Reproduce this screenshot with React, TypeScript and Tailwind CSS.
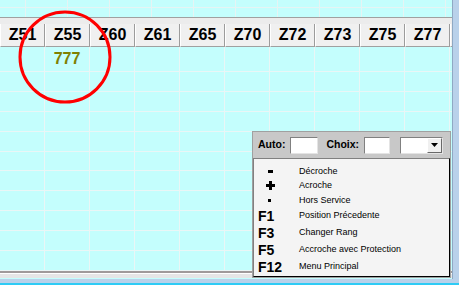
const columns = ["Z51", "Z55", "Z60", "Z61", "Z65", "Z70", "Z72", "Z73", "Z75", "Z77"]

const keys = [
  { key: "-", label: "Décroche", small: true },
  { key: "+", label: "Acroche", small: true },
  { key: "·", label: "Hors Service", small: true },
  { key: "F1", label: "Position Précedente", small: false },
  { key: "F3", label: "Changer Rang", small: false },
  { key: "F5", label: "Accroche avec Protection", small: false },
  { key: "F12", label: "Menu Principal", small: false },
]

const topLines = [25, 67, 109, 151, 193, 235, 277, 319, 361, 403, 445]

function KeyGlyph({ k }: { k: string }) {
  // the symbol keys are drawn as thick marks, like the bold system font of the original
  if (k === "-") return <div className="ml-[14px] w-[5px] h-[3px] bg-black" />
  if (k === "+")
    return (
      <svg className="ml-[12px]" width="9" height="9" viewBox="0 0 9 9">
        <path d="M3 0h3v3h3v3H6v3H3V6H0V3h3z" fill="#000" />
      </svg>
    )
  if (k === "·") return <div className="ml-[14px] w-[3px] h-[3px] bg-black" />
  return <span className="pl-[4px] text-[14px] font-bold text-black">{k}</span>
}

export default function App() {
  const rows = Array.from({ length: 11 }, (_, i) => i)

  return (
    <div className="relative w-[459px] h-[285px] overflow-hidden bg-[#c4fefd] font-['Liberation_Sans',Arial,sans-serif]">
      <div className="flex h-[279px]">
        {/* main grid area */}
        <div className="flex flex-col w-[452px]">
          {/* upper scrolled grid */}
          <div className="relative h-[18px] border-b border-[#a0a0a0]">
            <div className="absolute left-0 right-0 top-[7px] h-px bg-[#e6f4f4]" />
            {topLines.map((x) => (
              <div key={x} className="absolute top-0 bottom-0 w-px bg-[#e6f4f4]" style={{ left: x }} />
            ))}
          </div>
          <div className="h-[6px] bg-[#ececec]" />

          {/* header */}
          <div className="flex h-[23px] bg-[#f0f0f0]">
            {columns.map((c) => (
              <div
                key={c}
                className="w-[45px] shrink-0 flex items-center justify-center border-l border-white border-r border-r-[#9c9c9c] border-b border-b-[#a0a0a0] text-[16px] font-bold text-black"
              >
                {c}
              </div>
            ))}
            <div className="w-[2px] shrink-0 border-l border-white border-b border-b-[#a0a0a0]" />
          </div>

          {/* body */}
          <div className="grid grid-cols-[repeat(10,45px)_2px] grid-rows-[repeat(11,1fr)] h-[224px]">
            {rows.map((r) =>
              [...columns, "x"].map((c, ci) => (
                <div
                  key={`${r}-${c}`}
                  className={`flex items-center justify-center border-b border-[#eaf6f6] ${ci < 10 ? "border-r" : ""}`}
                >
                  {r === 0 && c === "Z55" && <span className="text-[16px] font-bold text-[#808000]">777</span>}
                </div>
              )),
            )}
          </div>

          <div className="h-[2px] bg-[#a09a9a]" />
          <div className="h-px bg-white" />
          <div className="h-[4px] bg-[#e6e6e6]" />
        </div>

        {/* right window edge */}
        <div className="w-[7px] border-l border-[#8fa9c4] bg-[#b9d1ea]" />
      </div>
      <div className="h-[4px] bg-[#b9d1ea]" />
      <div className="h-[2px] bg-[#2ecbf5]" />

      {/* red marker circle */}
      <svg className="absolute left-0 top-0" width="140" height="120" viewBox="0 0 140 120">
        <circle cx="65" cy="57" r="45" fill="none" stroke="#ff0000" strokeWidth="3" />
      </svg>

      {/* shortcut panel */}
      <div className="absolute left-[252px] top-[131px] w-[199px] h-[147px] flex flex-col bg-[#c8c8c8] border border-[#a0a0a0]">
        <div className="h-[26px] shrink-0 flex items-center pl-[5px] text-[10.5px] font-bold text-black">
          <span>Auto:</span>
          <div className="ml-[5px] w-[28px] h-[17px] bg-white border-t border-l border-[#808080] border-r border-b border-r-[#e4e4e4] border-b-[#e4e4e4]" />
          <span className="ml-[8px]">Choix:</span>
          <div className="ml-[5px] w-[26px] h-[17px] bg-white border-t border-l border-[#808080] border-r border-b border-r-[#e4e4e4] border-b-[#e4e4e4]" />
          <div className="ml-[10px] w-[43px] h-[17px] bg-white flex justify-end border-t border-l border-[#808080] border-r border-b border-r-[#e4e4e4] border-b-[#e4e4e4]">
            <div className="w-[15px] h-full bg-[#f0f0f0] flex items-center justify-center border-l border-t border-white border-r border-b border-r-[#696969] border-b-[#696969]">
              <svg width="7" height="4" viewBox="0 0 7 4">
                <path d="M0 0h7L3.5 4z" fill="#000" />
              </svg>
            </div>
          </div>
        </div>
        <div className="flex-1 mb-[2px] flex flex-col pt-[5px] bg-[#f4f4f4] border-t border-l border-[#808080] border-r border-b border-r-black border-b-black">
          {keys.map((k) => (
            <div key={k.key} className={`flex items-center shrink-0 ${k.small ? "h-[14.5px]" : "h-[17px]"}`}>
              <div className="w-[45px] shrink-0 flex items-center">
                <KeyGlyph k={k.key} />
              </div>
              <span className="text-[9px] text-black">{k.label}</span>
            </div>
          ))}
        </div>
      </div>
    </div>
  )
}
